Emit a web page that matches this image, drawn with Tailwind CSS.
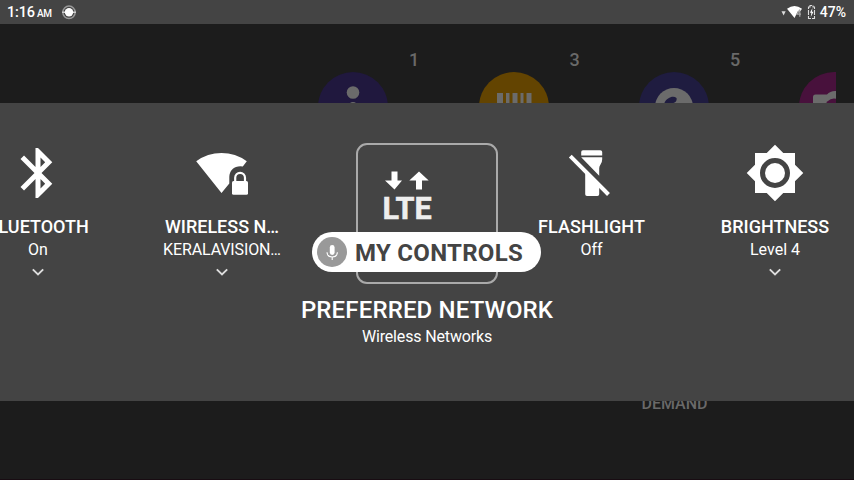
<!DOCTYPE html>
<html lang="en">
<head>
<meta charset="utf-8">
<title>My Controls</title>
<script src="https://cdn.jsdelivr.net/npm/@tailwindcss/browser@4"></script>
</head>
<body class="w-[854px] h-[480px] overflow-hidden bg-[#1c1c1c] text-white font-['Roboto','Noto_Sans',sans-serif]">
<div class="flex flex-col w-[854px] h-[480px] overflow-hidden">
  <!-- status bar -->
  <header class="flex items-center h-6 shrink-0 bg-[#444] pl-[7px] pr-2 font-medium">
    <span class="text-[14.5px] leading-6 pt-[2px] tracking-[-.15px]">1:16</span>
    <span class="text-[10px] leading-6 ml-[2px] pt-[3px] tracking-[-.4px]">AM</span>
    <svg class="ml-[9px]" width="16" height="16" viewBox="0 0 16 16"><circle cx="8" cy="8.300" r="6.200" fill="none" stroke="#999" stroke-width="1.500"/><path d="M1 8.300h3M12 8.300h3" stroke="#ccc" stroke-width="1.500"/><circle cx="8" cy="8.300" r="4.200" fill="#fff"/></svg>
    <svg class="ml-auto" width="36" height="16" viewBox="0 0 36 16">
      <path d="M.500 7.300h4.200L2.600 11.500z" fill="#ddd"/>
      <path d="M6 4.800Q13.500-.6 21 4.800L19.500 7H17L13.500 14z" fill="#fff"/>
      <path d="M18.800 5.500L16 10.200h4M18.800 5.500v7.300" fill="none" stroke="#aaa" stroke-width="1.200"/>
      <path d="M27.500 3h1.500V1.500h3V3h1.500v11.500h-6z" fill="none" stroke="#ddd" stroke-width="1.100" stroke-dasharray="5 1"/>
      <path d="M31.500 4L28.900 8.800h1.500L29.700 13l2.800-5.200h-1.600z" fill="#fff"/>
    </svg>
    <span class="text-[14px] leading-6 ml-[3px]">47%</span>
  </header>

  <!-- dimmed menu behind the panel -->
  <section class="flex h-[79px] shrink-0 pl-[318px] pr-[18px] overflow-hidden text-[18px] font-medium text-[#696969]">
    <div class="flex w-[160.500px] shrink-0 h-[130px]">
      <svg class="mt-12 shrink-0" width="70" height="70" viewBox="0 0 70 70"><circle cx="35" cy="35" r="35" fill="#20183e"/><circle cx="35" cy="20.500" r="6.300" fill="#6b6b6b"/><circle cx="35" cy="35" r="5" fill="#6b6b6b"/></svg>
      <span class="ml-[21px] mt-[25px] leading-[22px]">1</span>
    </div>
    <div class="flex w-[160.500px] shrink-0 h-[130px]">
      <svg class="mt-12 shrink-0" width="70" height="70" viewBox="0 0 70 70"><circle cx="35" cy="35" r="35" fill="#634401"/><path d="M18 21h6v25h-6zM27 21h3.500v25H27zM33.500 21h5v25h-5zM41.500 21h3v25h-3zM47.500 21h5v25h-5z" fill="#6b6b6b"/></svg>
      <span class="ml-[21px] mt-[25px] leading-[22px]">3</span>
    </div>
    <div class="flex w-[160px] shrink-0 h-[130px]">
      <svg class="mt-12 shrink-0" width="70" height="70" viewBox="0 0 70 70"><circle cx="35" cy="35" r="35" fill="#1f1c40"/><circle cx="35" cy="35" r="19" fill="#6b6b6b"/><path d="M25 32c2-6 9-9 12.500-6 1 4-3 5-6 6z" fill="#1f1c40"/></svg>
      <span class="ml-[21px] mt-[25px] leading-[22px]">5</span>
    </div>
    <div class="w-[37px] shrink-0 overflow-hidden">
      <svg class="mt-12" width="70" height="70" viewBox="0 0 70 70"><circle cx="35" cy="35" r="35" fill="#48113c"/><path d="M14 38V25q0-2.500 2.500-2.500H28q3-3.500 8-3.500h4v19z" fill="#6b6b6b"/><circle cx="35" cy="35.500" r="9" fill="#48113c"/></svg>
    </div>
  </section>

  <!-- controls panel -->
  <main class="flex h-[298px] shrink-0 bg-[#444] pt-10 whitespace-nowrap">
    <article class="flex flex-col items-center w-[184px] shrink-0 -ml-[54px]">
      <svg width="60" height="60" viewBox="0 0 24 24" fill="#fff"><path fill-rule="evenodd" d="M17.710 7.710L12 2h-1v7.590L6.410 5 5 6.410 10.590 12 5 17.590 6.410 19 11 14.410V22h1l5.710-5.710L13.410 12zM13 5.830l1.880 1.880L13 9.590zM14.880 16.290L13 18.170v-3.760z"/></svg>
      <h2 class="mt-[13px] text-[18px] leading-[22px] font-medium">BLUETOOTH</h2>
      <p class="mt-px text-[16px] leading-[22px]">On</p>
      <svg class="mt-[5px]" width="14" height="12" viewBox="0 0 14 12"><path d="M1.800 3.300L7 8.500 12.200 3.300" fill="none" stroke="#ddd" stroke-width="1.900"/></svg>
    </article>
    <article class="flex flex-col items-center w-[184px] shrink-0">
      <svg width="60" height="60" viewBox="0 0 60 60" fill="#fff"><path d="M4.200 18.200Q15.500 10 29.500 10T54.800 18.200L50.800 23.500Q47.500 22.600 44 24.100C39.200 26 37.300 30 37.300 35V40.500L29.500 50z"/><rect x="40" y="38" width="16" height="13.800" rx="1.600"/><path d="M43.200 39V34.800a4.900 4.900 0 0 1 9.800 0V39" fill="none" stroke="#fff" stroke-width="2.200"/></svg>
      <h2 class="mt-[13px] text-[18px] leading-[22px] font-medium">WIRELESS N…</h2>
      <p class="mt-px text-[16px] leading-[22px] tracking-[-.12px]">KERALAVISION…</p>
      <svg class="mt-[5px]" width="14" height="12" viewBox="0 0 14 12"><path d="M1.800 3.300L7 8.500 12.200 3.300" fill="none" stroke="#ddd" stroke-width="1.900"/></svg>
    </article>
    <article class="flex flex-col items-center w-[226px] shrink-0">
      <div class="relative w-[142px] h-[141px] shrink-0 border-2 border-[#aaa] rounded-[11px]">
        <svg class="mt-6 ml-6" width="52" height="54" viewBox="0 0 52 54"><path d="M9.500 2.500h6v9h4.500L12.500 20.500 3 11.500h6.500z" fill="#fff"/><path d="M34 20.500v-9h-6.700L37 2.500l9.700 9H40v9z" fill="#fff"/><text x=".4" y="49.800" font-size="31" font-weight="700" fill="#eee" stroke="#eee" stroke-width=".5" textLength="49.300" lengthAdjust="spacingAndGlyphs">LTE</text></svg>
        <div class="absolute left-[-46px] top-[87px] flex items-center w-[229px] h-10 rounded-full bg-white pl-[5px] text-[#444]">
          <svg class="shrink-0" width="30" height="30" viewBox="0 0 30 30"><circle cx="15" cy="15" r="15" fill="#999"/><rect x="12.800" y="8" width="4.800" height="10" rx="2.400" fill="#fff"/><path d="M10 15.200c.3 6.400 10.100 6.400 10.400 0M15.200 20v3" fill="none" stroke="#fff" stroke-width="1.100"/></svg>
          <span class="ml-[8px] pt-[2px] text-[24px] leading-10 font-bold tracking-[.28px]">MY CONTROLS</span>
        </div>
      </div>
      <h1 class="mt-[12px] text-[24px] leading-[28px] font-medium tracking-[.15px]">PREFERRED NETWORK</h1>
      <p class="mt-[2px] text-[16px] leading-[22px] tracking-[-.15px]">Wireless Networks</p>
    </article>
    <article class="flex flex-col items-center w-[103px] shrink-0">
      <svg width="60" height="60" viewBox="0 0 60 60" fill="#fff"><path d="M19.200 12.500V9q0-1.800 1.800-1.800H38.200q2 0 2 1.800v3.500zM19.200 14.300h21v2q0 3.200-1.800 5.500-1.200 1.500-1.200 3.500v7.400zM23.200 28l14 14v9.200q0 1.800-1.800 1.800H25q-1.800 0-1.800-1.800z"/><path d="M8.300 13.200L46.500 51.500" stroke="#fff" stroke-width="4"/></svg>
      <h2 class="mt-[13px] text-[18px] leading-[22px] font-medium tracking-[.1px]">FLASHLIGHT</h2>
      <p class="mt-px text-[16px] leading-[22px]">Off</p>
    </article>
    <article class="flex flex-col items-center w-[184px] shrink-0 ml-10">
      <svg width="60" height="60" viewBox="0 0 24 24" fill="#fff"><path fill-rule="evenodd" d="M20 8.690V4h-4.690L12 .69 8.690 4H4v4.690L.69 12 4 15.310V20h4.690L12 23.310 15.310 20H20v-4.690L23.310 12zM12 18a6 6 0 1 1 0-12 6 6 0 0 1 0 12z"/><circle cx="12" cy="12" r="4"/></svg>
      <h2 class="mt-[13px] text-[18px] leading-[22px] font-medium">BRIGHTNESS</h2>
      <p class="mt-px text-[16px] leading-[22px]">Level 4</p>
      <svg class="mt-[5px]" width="14" height="12" viewBox="0 0 14 12"><path d="M1.800 3.300L7 8.500 12.200 3.300" fill="none" stroke="#ddd" stroke-width="1.900"/></svg>
    </article>
  </main>

  <footer class="grow overflow-hidden pl-[641.500px] border-b border-[#180c12]">
    <span class="block -mt-2 text-[16px] leading-[21px] font-medium text-[#696969]">DEMAND</span>
  </footer>
</div>
</body>
</html>
